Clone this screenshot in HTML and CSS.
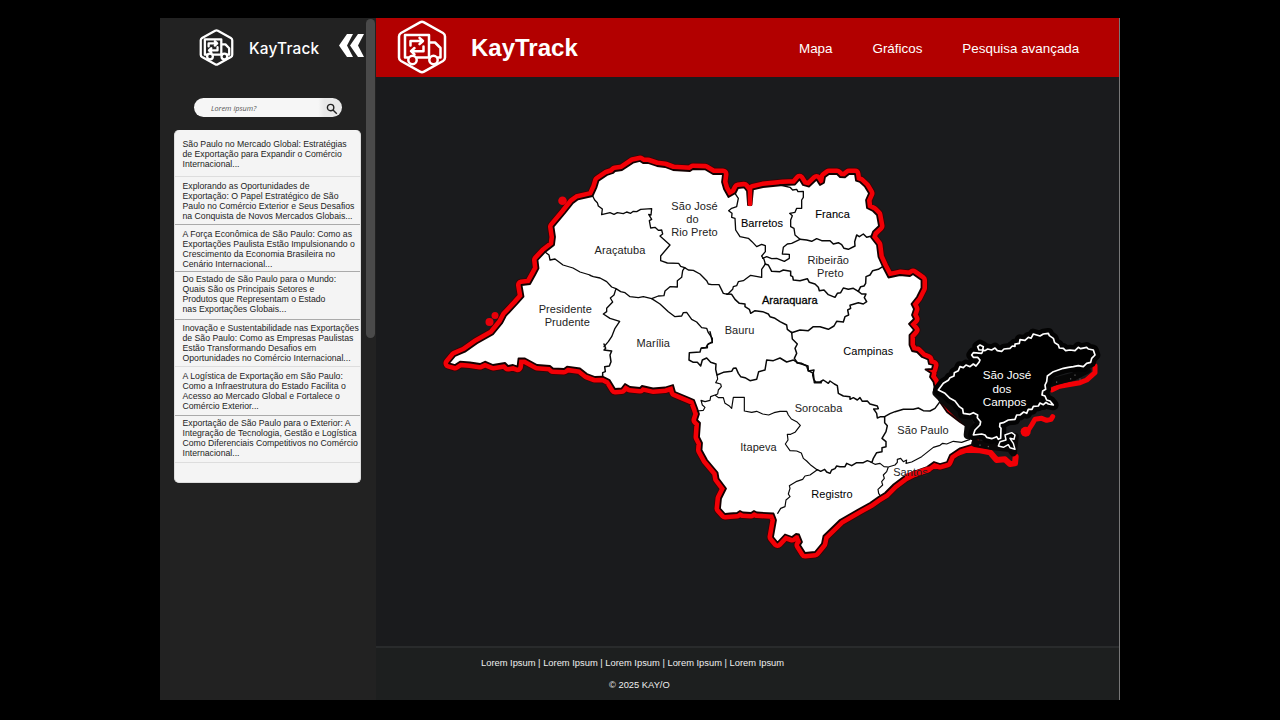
FILE: index.html
```html
<!DOCTYPE html>
<html lang="pt-BR">
<head>
<meta charset="utf-8">
<title>KayTrack</title>
<link rel="stylesheet" href="styles.css">
</head>
<body>
<svg class="defs" aria-hidden="true">
  <symbol id="truck" viewBox="0 0 50 54">
    <g class="truck">
      <path d="M23 2.4Q25 1.300 27 2.400L46 13Q48 14.200 48 16.500V37.500Q48 39.800 46 41L27 51.600Q25 52.700 23 51.600L4 41Q2 39.800 2 37.500V16.500Q2 14.200 4 13Z"/>
      <path d="M11 37.500H8V15H32V37.500H20M32 22.500H38L43.500 28V37.500H41M33 37.500H32"/>
      <circle cx="15.500" cy="40" r="4.200"/>
      <circle cx="36.500" cy="40" r="4.200"/>
      <path d="M13.500 25.500V21H25.500M22.500 17.800L26 21L22.500 24.200M26.500 26.500V31.200H14.500M17.500 28L14 31.200L17.500 34.400"/>
    </g>
  </symbol>
</svg>
<div class="app">
  <aside class="sidebar">
    <div class="side-brand">
      <svg class="side-logo"><use href="#truck"/></svg>
      <span class="side-name">KayTrack</span>
      <svg class="collapse" viewBox="0 0 26 23"><path d="M8 0H14L8 11.500L14 23H8L0 11.500ZM19 0H25L19 11.500L25 23H19L11 11.500Z" fill="#fff"/></svg>
    </div>
    <div class="search">
      <span>Lorem ipsum?</span>
      <svg class="lens" viewBox="0 0 12 12"><circle cx="4.600" cy="4.600" r="3.200"/><path d="M7 7L10.800 10.800"/></svg>
    </div>
    <ul class="news">
      <li class="n1">São Paulo no Mercado Global: Estratégias<br>de Exportação para Expandir o Comércio<br>Internacional...</li>
      <li class="n2">Explorando as Oportunidades de<br>Exportação: O Papel Estratégico de São<br>Paulo no Comércio Exterior e Seus Desafios<br>na Conquista de Novos Mercados Globais...</li>
      <li class="n3">A Força Econômica de São Paulo: Como as<br>Exportações Paulista Estão Impulsionando o<br>Crescimento da Economia Brasileira no<br>Cenário Internacional...</li>
      <li class="n4">Do Estado de São Paulo para o Mundo:<br>Quais São os Principais Setores e<br>Produtos que Representam o Estado<br>nas Exportações Globais...</li>
      <li class="n5">Inovação e Sustentabilidade nas Exportações<br>de São Paulo: Como as Empresas Paulistas<br>Estão Transformando Desafios em<br>Oportunidades no Comércio Internacional...</li>
      <li class="n6">A Logística de Exportação em São Paulo:<br>Como a Infraestrutura do Estado Facilita o<br>Acesso ao Mercado Global e Fortalece o<br>Comércio Exterior...</li>
      <li class="n7">Exportação de São Paulo para o Exterior: A<br>Integração de Tecnologia, Gestão e Logística<br>Como Diferenciais Competitivos no Comércio<br>Internacional...</li>
    </ul>
    <div class="scroll"></div>
  </aside>
  <main class="main">
    <header class="header">
      <svg class="logo"><use href="#truck"/></svg>
      <h1>KayTrack</h1>
      <nav><a>Mapa</a><a>Gráficos</a><a>Pesquisa avançada</a></nav>
    </header>
    <svg class="map" viewBox="376 77 744 569">
      <defs>
        <path id="state" d="M449 363.300L455 356L465 351.700L477 343.300L493 334.300L502 323.300L506 315.700L517 304L523.500 296.700L521.500 285L530 284L535 275L538.500 268.300L537.500 260L545 252L554 245L555 237L553.500 226.700L565 213L573 203L578 199.300L592.500 196L596.500 187.300L598.500 180.700L607 175L613 173L615 171L622 170L633 162.700L640 161L643 163L648 163L657 166L665 167L673 170L690 171L693 169L705 169.300L713 174L723 174L722 182L724 189L728.500 197L735.500 193L738 188L744 187.300L747 191L748 205H751.500L753 189.300L763 187L783 185L795 184.500L799.500 179.300L803 185L809 186.700L816.500 179.500L820 185L824 182.700L825 177L829 174L837 174L840 177L845 177.300L849 174L855 174L856 180.700L860 182L865 186.700L869 193.300L866 200L867 208L873 211L877 215L879 226L873 231.700L871 237.300L877 245L878.500 257L883 267L888.500 277.500L900 275L910 276L913 274L921.500 280L921.500 288L917 297L911.500 304L914 309L912 315L914 319L909 324L914 330L909.500 335L909.500 345L912 351L917 352L922 357L928 359.500L929 364L933 365L932 369L925.500 369.500L931 373L930 377L933.500 382L935 389.500L940 402L947 412L960 422L970 428.500V436L973.500 438.500L972.500 444.500L960 448.300L950 455L947 462L940 464L934 462L927 467L913 472L903.500 477L893.500 484.500L885 493L878.500 497L870 503L860 508.500L840 520L823.500 536L822 543.500L815 552L805 553L800 545L802 542L799 534.500L796 534L792 537L785 534.500L777.500 542.500L773 537L776 520L773.500 513.500L757 512.500L754 511L751 513L743 512.500L740 511L737 513L730 513.500L725 514L720 508.500L721 498.500L726 488.500L718.500 478.500L717.500 472.500L707 460L701.500 450L702 443L699 437L700 423L697 420L699 414L697 408L694 400L687 397L675 392L673 385L665 387.500L653 388.500L642 386L640 388L630 387L625 384L621.500 388.500L615 389L609.500 380L603 376.700L595 377L587 374L580 368.500L567 366.700L564 369L553 368.500L550 366L537 365L525 358.500H518.500L517.500 366.700L513 365L508 366L505 363L493 365L485 361.700L480 364L470 362.500L460 361.700L455 365Z"/>
        <path id="sjc" d="M115 210L130 190L145 181L150 173L162 168L163 158L175 152L180 140L190 143L198 135L210 140L220 132L228 138L237 127L240 120L233 112H220L215 105L220 98L245 100L250 90L237 90L233 80L240 75L250 80L248 90L255 92L263 87L275 90L285 84L292 92L305 94L312 87L330 85L337 78L345 79V72L358 70L360 59L375 61L385 52L393 55L400 42L420 48L430 42L445 40L448 47L460 55L464 68L475 75L478 84L490 85L497 92L510 90L525 92L535 82L542 86L560 82L565 87L580 90L585 105L575 115L572 127L560 130L550 140L535 137L520 140L505 142L490 145L475 150L460 155L442 168L440 185L435 195L437 208L428 213L426 225L435 228L440 240L450 243L460 255L445 252L438 247L430 254L420 249L415 258L400 259L396 268H385L380 280L371 276L360 285H350L345 298L325 300L310 308L300 310L299 320L303 325L302 355L295 358L290 350L275 356L260 352L255 345L245 342L220 345L225 330L240 315L242 305L232 293L233 285L220 278L210 283L190 280L188 267L178 260L165 243L150 235L135 220Z"/>
      </defs>
      <g fill="none" stroke-linejoin="round" stroke-linecap="round">
        <use href="#state" stroke="#3a0003" stroke-width="12.500"/>
        <use href="#state" stroke="#f20006" stroke-width="11"/>
        <g transform="translate(900 320) scale(.33333)">
          <path d="M175 398L200 389L240 391L270 397L290 420L315 418L330 432L345 430L347 410" stroke="#f20006" stroke-width="18"/>
          <path d="M585 137V158L560 180L540 188L500 195L475 200L455 210M458 290L453 298L440 301L425 295L405 298L395 315L380 338L370 333" stroke="#f20006" stroke-width="15"/>
          <circle cx="377" cy="335" r="15" fill="#f20006"/>
        </g>
        <path d="M895 476L915 470L928 468" stroke="#f20006" stroke-width="5"/>
        <use href="#state" fill="#fff" stroke="#140000" stroke-width="1.800"/>
        <path d="M750 189V204" stroke="#f20006" stroke-width="4.500"/>
        <path d="M908 476L928 469.500" stroke="#f20006" stroke-width="6"/>
        <g fill="#e8000a"><circle cx="562.500" cy="200.700" r="4.300"/><circle cx="495" cy="315.500" r="3.500"/><circle cx="489.500" cy="322" r="4"/></g>
        <g transform="translate(590 150) scale(.33333)" stroke="#080808" stroke-width="4">
          <path d="M8 138L14 150L22 158L25 168L37 177L35 194L60 188L72 193L82 188L100 191L110 186L122 190L130 184L140 185L152 178L185 176L183 195L176 193L185 208L178 212L182 234L195 232L205 241L215 240L218 252L210 258L240 285L212 318V332L232 339L266 340L272 349L284 353L295 360L310 361L330 372L350 392L355 402L365 404H387L400 430L413 433L428 418L430 410L440 407L445 395L460 392L482 376L515 382V358L526 342L522 328L515 318L526 305V287L515 283L500 290L486 275L475 265L450 260L437 240L435 205L425 202L426 190L416 182L425 175L440 170L445 145L435 130"/>
          <path d="M284 353L278 362L275 382L262 392V411L240 410L225 423L222 437L205 438L185 446L160 440L145 443L120 440L105 428L92 425L78 416L65 411L50 395L30 384L10 380L0 376M78 416L72 435L61 444L68 456L50 475V485L40 492L60 505L89 514L75 535L65 560L55 575L42 590"/>
          <path d="M185 446L210 462L235 485L255 500L275 498L280 488L290 487L305 508L320 516L335 533L350 535L355 548L367 565V578L355 581L348 592L335 594"/>
          <path d="M570 105L600 112L608 120L620 118L624 125L640 124V142L635 150V175H620L615 187L599 190L607 197L602 210V230L612 235L615 255L630 268L605 280L592 282L580 292L577 312L598 313V325L583 334L560 325L545 326L530 320L518 325"/>
        </g>
        <path d="M545 252L549 255L550 260L555 259L563 265L573 268L580 272L590 275" stroke="#080808" stroke-width="1.300"/>
        <g transform="translate(720 150) scale(.33333)" stroke="#080808" stroke-width="4.500">
          <path d="M240 268L260 270L275 274L290 266L305 272L330 272L340 282L355 278L365 284L372 295L385 298L405 288L404 275L410 255L418 260L430 252L440 262L455 258"/>
          <path d="M135 342L145 345L155 364L180 365L190 360L212 364V377L218 380L220 390L240 392L262 386L268 397L285 402L295 412L298 422L312 420L325 434L345 442L352 430L362 428L370 414L385 418L400 415L415 424L422 410L432 408L437 400L438 380L450 375L458 362L475 358L488 350"/>
          <path d="M415 424L425 432L438 432L433 443L440 455L430 462L415 458L390 466L392 475L383 480L386 495L375 500L370 516L350 514L342 528L325 538L300 530L280 530L265 542L240 540L215 548L202 538L200 525L180 515L165 505L150 500L145 492L128 485L105 482L92 490L88 478L75 470V462L58 460L45 448L35 433L20 432"/>
        </g>
        <g transform="translate(580 280) scale(.33333)" stroke="#080808" stroke-width="4.500">
          <path d="M635 157L637 177L652 192L645 205L650 220L643 235L652 248L684 258L685 272L700 280L703 308L724 308"/>
          <path d="M72 192L77 205L72 210L95 213L90 225L93 245L88 258L74 260L76 275L68 278V288"/>
          <path d="M390 155L397 185L382 195V203L363 205L360 216L328 218L327 240L340 247H352L362 258L367 240L380 234L392 247L408 252L407 268L411 285L430 277L455 274L460 265L468 264L475 280L482 290L495 293L510 302L530 298L536 275L555 270L560 240L580 242L600 234L620 246L640 240L652 248"/>
          <path d="M411 285L413 297L407 308L422 312L424 320L415 330L413 342L405 345L392 350L390 361L375 365L363 361L367 375L375 382L370 391L352 393M405 345L415 353L430 353L435 370L447 377L455 385L460 352H493V393L515 397L530 394L548 402L566 405L582 398L600 394H620L625 405L634 417L650 425L661 436L645 457L632 463L622 463L624 480L616 492L630 512L650 513L664 519L670 535L680 543L693 556L712 570" stroke-width="3.500"/>
        </g>
        <g transform="translate(780 300) scale(.33333)" stroke="#080808" stroke-width="4.500">
          <path d="M50 188L65 190L80 198L85 213L102 210L98 225L101 238L107 246L120 246L130 240L145 250L150 243L163 252L172 257L175 280L190 288L210 290V298L220 293L232 300L240 293L247 304L262 303L270 312L292 318L295 326L281 327L290 340L292 354L302 350L314 350L330 341L345 335L370 328L400 328L415 324L430 332L450 333L465 325L480 305"/>
          <path d="M314 350V368L322 377L318 395L306 415L318 425V440L306 443V455L290 458L280 475L276 487L262 482L250 488L230 488L215 497L200 490L195 500H180L170 498L165 506L155 510L150 520L140 516L134 508L122 514L112 509"/>
          <path d="M273 487L285 493L300 490L312 500L325 501L345 495L352 487L352 478L362 475L370 485L380 480L378 490L395 486L425 470L460 442L480 436L488 430L500 432L520 424L545 427L570 418M325 501L320 515L310 525L313 535L305 545L308 555L294 568L296 580L300 586M112 509L90 525L75 528L68 538L48 545L28 557L30 565L25 582L30 590L18 600L15 620L2 625L-7 640" stroke-width="3.500"/>
        </g>
        <g transform="translate(900 320) scale(.33333)">
          <path d="M110 218L170 278L208 310L204 345" stroke="#0b0b0b" stroke-width="26"/>
          <path d="M225 370L280 380L330 385L340 398L345 350" stroke="#090707" stroke-width="22"/>
          <path d="M452 188L520 170L560 150" stroke="#060606" stroke-width="24"/>
          <use href="#sjc" stroke="#030303" stroke-width="32"/>
          <use href="#sjc" fill="#000" stroke="#fff" stroke-width="5"/>
          <path d="M295 378L300 365L318 360L315 345L335 338L345 345L342 358L330 355L340 370L345 388L330 383L325 374L310 382Z" fill="#000" stroke="#fff" stroke-width="4.500"/>
          <path d="M470 186V187M512 176V177M525 165V166M540 177V178M240 375V376M265 379V380" stroke="#555" stroke-width="4"/>
        </g>
      </g>
      <g class="labels" text-anchor="middle">
        <text x="694.500" y="210">São José</text><text x="692.500" y="223">do</text><text x="694.500" y="236">Rio Preto</text>
        <text x="620" y="254">Araçatuba</text>
        <text x="565.300" y="312.500">Presidente</text><text x="567.300" y="325.500">Prudente</text>
        <text x="653.300" y="346.500">Marília</text><text x="739.500" y="333.500">Bauru</text>
        <text class="dark" x="762" y="227">Barretos</text><text class="dark" x="832.500" y="218">Franca</text>
        <text x="828.300" y="264">Ribeirão</text><text x="830.300" y="277">Preto</text>
        <text class="strong" x="789.800" y="304">Araraquara</text>
        <text class="mid" x="868.300" y="355">Campinas</text><text x="818.500" y="412">Sorocaba</text>
        <text x="923" y="434">São Paulo</text><text x="758.500" y="451">Itapeva</text>
        <text class="mid" x="832" y="498">Registro</text><text x="910.500" y="475.500">Santos</text>
        <g class="light"><text x="1007" y="378.500">São José</text><text x="1002" y="392.500">dos</text><text x="1004.500" y="406">Campos</text></g>
      </g>
    </svg>
    <footer class="footer">
      <p class="links">Lorem Ipsum | Lorem Ipsum | Lorem Ipsum | Lorem Ipsum | Lorem Ipsum</p>
      <p class="copy">© 2025 KAY/O</p>
    </footer>
  </main>
</div>
</body>
</html>
```
FILE: styles.css
```css
* { box-sizing: border-box; }
body {
  margin: 0;
  height: 720px;
  padding: 18px 160px 20px;
  background: #000;
  overflow: hidden;
  font-family: "Liberation Sans", Arial, sans-serif;
}
.defs { position: absolute; width: 0; height: 0; }
.truck {
  fill: none;
  stroke: #fff;
  stroke-width: var(--line, 2.5px);
  stroke-linejoin: round;
  stroke-linecap: round;
}
.app { display: flex; width: 960px; height: 682px; }
.sidebar { position: relative; width: 216px; background: #222; flex: none; color: #fff; }
.side-brand { display: flex; align-items: center; height: 58px; padding-left: 39px; }
.side-logo { width: 35px; height: 37px; margin-top: 1px; --line: 3.3px; }
.side-name {
  width: 91px;
  margin: 2px 0 0 15px;
  font: 500 15.4px Inter, sans-serif;
  letter-spacing: .2px;
}
.collapse { width: 26px; height: 23px; margin: -4px 0 0 -1px; }
.search {
  display: flex;
  align-items: center;
  justify-content: space-between;
  width: 148px;
  height: 19px;
  margin: 22px 0 0 34px;
  padding: 0 4px 0 17px;
  border-radius: 10px;
  background: linear-gradient(90deg, #f6f6f6 0 84%, #e8e8e8 88%);
  color: #555;
  font: italic 400 7.3px "Open Sans", sans-serif;
}
.lens { width: 12px; height: 12px; fill: none; stroke: #222; stroke-width: 1.4; margin-top: 2px; }
.news {
  list-style: none;
  width: 187px;
  height: 353px;
  margin: 13px 0 0 14px;
  padding: 0;
  background: #f4f4f4;
  border: 1px solid #ddd;
  border-top: 0;
  border-radius: 5px;
  color: #1c1c1c;
  font-size: 8.7px;
  line-height: 10px;
  white-space: nowrap;
}
.news li { padding: 4px 0 0 7.5px; border-bottom: 1px solid #aaa; }
.news .n1 { height: 47px; padding-top: 9px; border-color: #ddd; }
.news .n2 { height: 48px; }
.news .n3 { height: 47px; }
.news .n4 { height: 48px; padding-top: 2px; }
.news .n5 { height: 47px; padding-top: 3px; border-color: #ddd; }
.news .n6 { height: 49px; }
.news .n7 { height: 47px; padding-top: 2px; border-color: #ddd; }
.scroll { position: absolute; top: 1px; right: 1px; width: 9px; height: 319px; border-radius: 5px; background: #4a4a4a; }
.main { display: flex; flex-direction: column; width: 744px; background: #1a1b1d; border-right: 1px solid #777; }
.header { display: flex; align-items: center; height: 59px; background: #b20000; color: #fff; }
.logo { width: 50px; height: 54px; margin-left: 21px; margin-top: -1px; }
h1 { width: 328px; margin: 0 0 0 24px; font-size: 24px; line-height: 30px; }
nav { display: flex; gap: 40px; font-size: 13.4px; margin-top: 2px; white-space: nowrap; }
.map { display: block; width: 744px; height: 569px; flex: none; }
.labels { font-size: 11px; letter-spacing: .07px; fill: #222; }
.labels .mid { fill: #000; }
.labels .dark { fill: #000; stroke: #000; stroke-width: .1px; }
.labels .strong { fill: #000; stroke: #000; stroke-width: .3px; }
.labels .light { font-size: 11.7px; letter-spacing: 0; fill: #fff; }
.footer { height: 54px; border-top: 2px solid #292b2c; background: #1d1f1f; color: #eee; }
.footer p { margin: 0; font-size: 9.35px; line-height: 12px; white-space: nowrap; }
.footer .links { padding: 9px 0 0 105px; }
.footer .copy { padding: 10px 0 0 233px; }
```
